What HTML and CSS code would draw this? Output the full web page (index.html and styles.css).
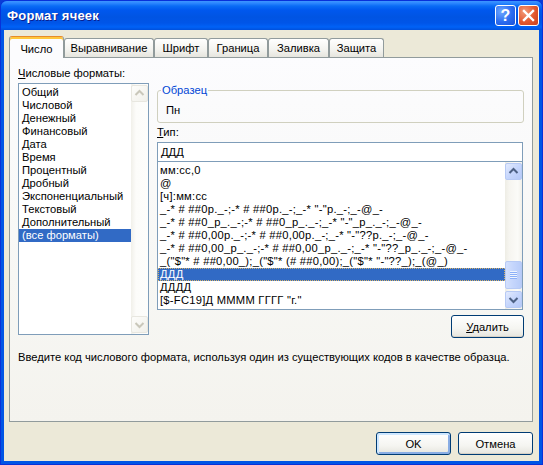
FILE: index.html
```html
<!DOCTYPE html>
<html lang="ru">
<head>
<meta charset="utf-8">
<title>Формат ячеек</title>
<link rel="stylesheet" href="styles.css">
</head>
<body>
<div class="window">
  <div class="titlebar">
    <span class="title">Формат ячеек</span>
    <div class="tb-buttons">
      <span class="tb-btn help">?</span>
      <span class="tb-btn close">
        <svg width="19" height="19" viewBox="0 0 19 19"><path d="M5 5 L14 14 M14 5 L5 14" stroke="#fff" stroke-width="2.4" stroke-linecap="square"/></svg>
      </span>
    </div>
  </div>
  <div class="client">
    <div class="tabs">
      <div class="tab active">Число</div>
      <div class="tab">Выравнивание</div>
      <div class="tab">Шрифт</div>
      <div class="tab">Граница</div>
      <div class="tab">Заливка</div>
      <div class="tab">Защита</div>
    </div>
    <div class="panel">
      <div class="main">
        <div class="left">
          <div class="label"><u>Ч</u>исловые форматы:</div>
          <div class="listbox cat">
            <ul class="items cat-items">
              <li>Общий</li>
              <li>Числовой</li>
              <li>Денежный</li>
              <li>Финансовый</li>
              <li>Дата</li>
              <li>Время</li>
              <li>Процентный</li>
              <li>Дробный</li>
              <li>Экспоненциальный</li>
              <li>Текстовый</li>
              <li>Дополнительный</li>
              <li class="sel">(все форматы)</li>
            </ul>
            <div class="scrollbar disabled">
              <div class="sb-btn"><svg width="15" height="15" viewBox="0 0 15 15"><polyline points="3.5,9 7.5,5 11.5,9" fill="none" stroke="#C9C7BA" stroke-width="2"/></svg></div>
              <div class="sb-track"></div>
              <div class="sb-btn"><svg width="15" height="15" viewBox="0 0 15 15"><polyline points="3.5,6 7.5,10 11.5,6" fill="none" stroke="#C9C7BA" stroke-width="2"/></svg></div>
            </div>
          </div>
        </div>
        <div class="right">
          <fieldset class="sample">
            <legend>Образец</legend>
            <div class="sample-value">Пн</div>
          </fieldset>
          <div class="label type-label"><u>Т</u>ип:</div>
          <div class="type-input">ДДД</div>
          <div class="listbox fmt">
            <ul class="items fmt-items">
              <li>мм:сс,0</li>
              <li>@</li>
              <li>[ч]:мм:сс</li>
              <li>_-* # ##0р._-;-* # ##0р._-;_-* "-"р._-;_-@_-</li>
              <li>_-* # ##0_р_._-;-* # ##0_р_._-;_-* "-"_р_._-;_-@_-</li>
              <li>_-* # ##0,00р._-;-* # ##0,00р._-;_-* "-"??р._-;_-@_-</li>
              <li>_-* # ##0,00_р_._-;-* # ##0,00_р_._-;_-* "-"??_р_._-;_-@_-</li>
              <li>_("$"* # ##0,00_);_("$"* (# ##0,00);_("$"* "-"??_);_(@_)</li>
              <li class="sel">ДДД</li>
              <li>ДДДД</li>
              <li>[$-FC19]Д ММММ ГГГГ "г."</li>
            </ul>
            <div class="scrollbar">
              <div class="sb-btn"><svg width="15" height="15" viewBox="0 0 15 15"><polyline points="3.5,9 7.5,5 11.5,9" fill="none" stroke="#4D6185" stroke-width="2"/></svg></div>
              <div class="sb-track">
                <div class="sb-thumb"><span class="grip"></span></div>
              </div>
              <div class="sb-btn"><svg width="15" height="15" viewBox="0 0 15 15"><polyline points="3.5,6 7.5,10 11.5,6" fill="none" stroke="#4D6185" stroke-width="2"/></svg></div>
            </div>
          </div>
          <div class="del-row">
            <button class="btn btn-del"><u>У</u>далить</button>
          </div>
        </div>
      </div>
      <p class="hint">Введите код числового формата, используя один из существующих кодов в качестве образца.</p>
    </div>
    <div class="footer">
      <button class="btn default">OK</button>
      <button class="btn">Отмена</button>
    </div>
  </div>
</div>
</body>
</html>
```
FILE: styles.css
```css
* { box-sizing: border-box; }
html, body { margin: 0; padding: 0; }
body {
  width: 543px;
  height: 465px;
  overflow: hidden;
  background: #0A3CD6;
  font-family: "Liberation Sans", Arial, sans-serif;
  font-size: 11.2px;
  color: #000;
}
.window {
  width: 543px;
  height: 465px;
  display: flex;
  flex-direction: column;
  background: #0055E5;
  border: 1px solid #0831D9;
  border-radius: 7px 7px 0 0;
}
.titlebar {
  height: 29px;
  flex: none;
  display: flex;
  align-items: center;
  padding: 0 3px 0 6px;
  border-radius: 6px 6px 0 0;
  background: linear-gradient(to bottom, #3D95FF 0px, #2E88FF 2px, #0A6CF5 5px, #0058EE 9px, #0054E3 16px, #0055E8 22px, #0062F7 26px, #0050DC 29px);
}
.title {
  flex: 1;
  color: #fff;
  font: bold 13px "Liberation Sans", Arial, sans-serif;
  letter-spacing: 0.2px;
  text-shadow: 1px 1px 0 #0A1E8F;
}
.tb-buttons { display: flex; gap: 2px; }
.tb-btn {
  width: 21px;
  height: 21px;
  border: 1px solid #fff;
  border-radius: 3px;
  display: flex;
  align-items: center;
  justify-content: center;
}
.help {
  background: radial-gradient(circle at 30% 30%, #6FA8FF, #2B6CF0 55%, #1A52D8);
  color: #fff;
  font: bold 16px "Liberation Sans", Arial, sans-serif;
  line-height: 1;
}
.close {
  background: radial-gradient(circle at 30% 30%, #F39A78, #E2582F 55%, #C8401E);
}
.client {
  flex: 1;
  margin: 0 3px 3px;
  background: #ECE9D8;
  padding: 6px 6px 0 5px;
  display: flex;
  flex-direction: column;
}
.tabs {
  height: 21px;
  display: flex;
  align-items: flex-end;
}
.tab {
  height: 19px;
  padding: 0 5px;
  border: 1px solid #919B9C;
  border-bottom: none;
  border-radius: 3px 3px 0 0;
  background: linear-gradient(#FFFFFF, #F3F3EF 60%, #E6E5DE);
  display: flex;
  align-items: center;
  justify-content: center;
  white-space: nowrap;
}
.tab:nth-child(1) { width: 55px; }
.tab:nth-child(2) { width: 90px; }
.tab:nth-child(3) { width: 54px; }
.tab:nth-child(4) { width: 60px; }
.tab:nth-child(5) { width: 61px; }
.tab:nth-child(6) { width: 55px; }
.tab.active {
  height: 22px;
  margin-bottom: -1px;
  position: relative;
  z-index: 1;
  background: #FCFCFE;
  border-top: 1px solid #E68B2C;
  box-shadow: inset 0 2px 0 #FFC73C;
  padding-top: 2px;
}
.panel {
  height: 365px;
  flex: none;
  border: 1px solid #919B9C;
  background: linear-gradient(#FCFCFE, #F7F7F4 60%, #F4F3EE);
  padding: 8px 8px 0 8px;
  display: flex;
  flex-direction: column;
}
.main {
  display: flex;
  gap: 8px;
  align-items: flex-start;
}
.left { width: 131px; flex: none; display: flex; flex-direction: column; }
.right { width: 367px; flex: none; display: flex; flex-direction: column; }
.label {
  height: 14px;
  line-height: 14px;
  margin-bottom: 3px;
  white-space: nowrap;
}
.listbox {
  border: 1px solid #7F9DB9;
  background: #fff;
  display: flex;
}
.cat { height: 252px; }
.items {
  flex: 1;
  list-style: none;
  margin: 0;
  min-width: 0;
}
.items li {
  height: 13px;
  line-height: 13px;
  white-space: pre;
  overflow: hidden;
}
.items li.sel {
  background: #316AC5;
  color: #fff;
}
.cat-items { padding: 2px 0 0 0; }
.cat-items li { padding-left: 3px; }
.fmt-items { padding: 2px 0 0 0; }
.fmt-items li { padding-left: 2px; letter-spacing: 0.25px; }
.fmt-items li.sel {
  outline: 1px dotted #D7B266;
  outline-offset: -1px;
}
.scrollbar {
  width: 17px;
  flex: none;
  display: flex;
  flex-direction: column;
  padding: 1px 0;
  background: linear-gradient(to right, #EEEDE5, #F6F5F0 25%, #FBFBF8 75%, #F1F0EA);
}
.sb-btn {
  height: 17px;
  width: 17px;
  flex: none;
  display: flex;
  align-items: center;
  justify-content: center;
  border: 1px solid #B7CAF5;
  border-radius: 2px;
  background: linear-gradient(135deg, #E3EBFE, #C6D6FC 50%, #B5C9F8);
}
.disabled .sb-btn {
  border-color: #E8E7E0;
  background: linear-gradient(135deg, #FDFDFB, #F1F0EA);
}
.disabled { background: linear-gradient(to right, #F1F0EA, #FCFCFA 30%, #FDFDFB); }
.sb-track {
  flex: 1;
  display: flex;
  flex-direction: column;
  justify-content: flex-end;
  padding-bottom: 2px;
}
.sb-thumb {
  height: 28px;
  border: 1px solid #B7CAF5;
  border-radius: 2px;
  background: linear-gradient(to right, #D3E0FD, #C4D5FC 50%, #B8CCF9);
  display: flex;
  align-items: center;
  justify-content: center;
}
.grip {
  width: 7px;
  height: 8px;
  background: repeating-linear-gradient(to bottom, #EEF4FE 0, #EEF4FE 1px, #8CB0F8 1px, #8CB0F8 2px);
}
.sample {
  margin: 17px 0 0 0;
  height: 40px;
  padding: 6px 8px 0 8px;
  border: 1px solid #D0D0BF;
  border-radius: 3px;
  min-width: 0;
}
.sample legend {
  margin-left: -5px;
  padding: 0 1px;
  line-height: 14px;
  color: #0046D5;
}
.sample-value { line-height: 14px; }
.type-label { margin-top: 2px; }
.type-input {
  height: 20px;
  width: 366px;
  border: 1px solid #7F9DB9;
  background: #fff;
  padding-left: 3px;
  line-height: 18px;
}
.fmt {
  height: 148px;
  width: 366px;
  border-top: none;
}
.del-row {
  display: flex;
  justify-content: flex-end;
  margin-top: 5px;
}
.btn {
  font: inherit;
  width: 75px;
  height: 23px;
  padding: 0;
  color: #000;
  border: 1px solid #003C74;
  border-radius: 3px;
  background: linear-gradient(#FFFFFF, #F5F5F1 60%, #E6E5DE);
  box-shadow: inset 0 -1px 0 #D6D0C5;
}
.btn-del { width: 73px; }
.btn.default {
  box-shadow: inset 1px 1px 0 1px #CEE7FF, inset -1px -1px 0 1px #89ADE4;
}
.hint {
  margin: 12px 0 0 0;
  line-height: 14px;
  white-space: nowrap;
}
.footer {
  margin-top: 10px;
  display: flex;
  justify-content: flex-end;
  gap: 7px;
}
```
